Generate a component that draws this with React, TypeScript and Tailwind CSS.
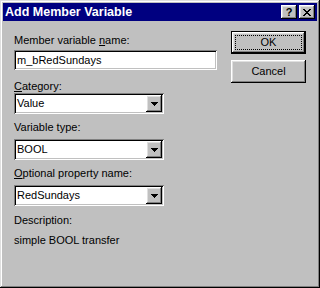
const raised =
  "shadow-[inset_-1px_-1px_0_#000,inset_1px_1px_0_#fff,inset_-2px_-2px_0_#808080,inset_2px_2px_0_#dfdfdf]";
const sunken =
  "shadow-[inset_1px_1px_0_#808080,inset_-1px_-1px_0_#fff,inset_2px_2px_0_#000,inset_-2px_-2px_0_#c0c0c0]";

function CloseGlyph() {
  const rows = ["11000011", "01100110", "00111100", "00011000", "00111100", "01100110", "11000011"];
  return (
    <svg width="8" height="7" viewBox="0 0 8 7" shapeRendering="crispEdges">
      {rows.map((r, y) =>
        r.split("").map((c, x) => (c === "1" ? <rect key={`${x}-${y}`} x={x} y={y} width="1" height="1" fill="#000" /> : null))
      )}
    </svg>
  );
}

function Combo({ value }: { value: string }) {
  return (
    <div className={`h-[21px] w-[150px] bg-white ${sunken} flex items-stretch p-[2px]`}>
      <div className="flex-1 pl-[1px] flex items-center leading-none">{value}</div>
      <div className={`w-[16px] bg-[#c0c0c0] ${raised} flex items-center justify-center`}>
        <svg width="7" height="4" viewBox="0 0 7 4" shapeRendering="crispEdges">
          <path d="M0 0h7v1h-1v1h-1v1h-1v1h-1v-1h-1v-1h-1v-1h-1z" fill="#000" />
        </svg>
      </div>
    </div>
  );
}

function Label({ children, className = "" }: { children: React.ReactNode; className?: string }) {
  return <div className={`leading-[13px] ${className}`}>{children}</div>;
}

export default function App() {
  return (
    <div
      className={`w-[320px] h-[288px] bg-[#c0c0c0] p-[3px] flex flex-col text-[11px] text-black font-['Liberation_Sans',Arial,sans-serif] shadow-[inset_-1px_-1px_0_#000,inset_1px_1px_0_#dfdfdf,inset_-2px_-2px_0_#808080,inset_2px_2px_0_#fff]`}
    >
      {/* Title bar */}
      <div className="h-[18px] bg-[#000080] flex items-center pl-[2px] pr-[2px]">
        <span className="text-white font-bold text-[12.5px] leading-none">Add Member Variable</span>
        <div className="ml-auto flex">
          <div className={`w-[16px] h-[14px] bg-[#c0c0c0] ${raised} flex items-center justify-center font-bold text-[11px] leading-none`}>
            ?
          </div>
          <div className={`ml-[2px] w-[16px] h-[14px] bg-[#c0c0c0] ${raised} flex items-center justify-center`}>
            <CloseGlyph />
          </div>
        </div>
      </div>

      {/* Client area */}
      <div className="flex pl-[11px]">
        <div className="w-[203px] flex flex-col">
          <Label className="mt-[13px]">
            Member variable <span className="underline">n</span>ame:
          </Label>
          <div className={`mt-[3px] h-[20px] bg-white ${sunken} flex items-center pl-[3px]`}>m_bRedSundays</div>

          <Label className="mt-[10px]">
            <span className="underline">C</span>ategory:
          </Label>
          <div className="mt-[0px]">
            <Combo value="Value" />
          </div>

          <Label className="mt-[7px]">Variable type:</Label>
          <div className="mt-[5px]">
            <Combo value="BOOL" />
          </div>

          <Label className="mt-[7px]">
            <span className="underline">O</span>ptional property name:
          </Label>
          <div className="mt-[5px]">
            <Combo value="RedSundays" />
          </div>

          <Label className="mt-[8px]">Description:</Label>
          <Label className="mt-[7px]">simple BOOL transfer</Label>
        </div>

        <div className="ml-[14px] pt-[10px] flex flex-col">
          <button className={`w-[75px] h-[23px] bg-[#c0c0c0] border border-black ${raised} p-[3px] flex`}>
            <span className="flex-1 border border-dotted border-black flex items-center justify-center leading-none">
              OK
            </span>
          </button>
          <button className={`mt-[6px] w-[75px] h-[23px] bg-[#c0c0c0] ${raised} flex items-center justify-center leading-none`}>
            Cancel
          </button>
        </div>
      </div>
    </div>
  );
}
